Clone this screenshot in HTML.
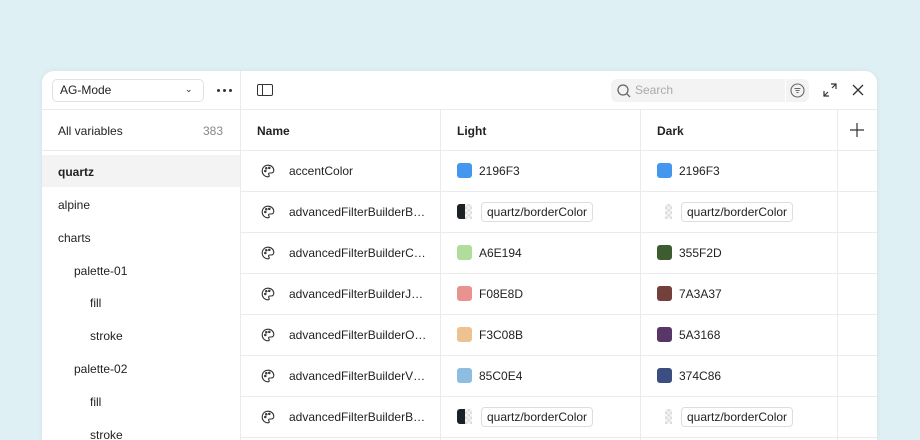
<!DOCTYPE html><html><head><style>
*{margin:0;padding:0;box-sizing:border-box}
html,body{width:920px;height:440px;overflow:hidden}
body{background:#dff0f4;font-family:"Liberation Sans",sans-serif;font-size:12px;color:#222;position:relative}
.p{position:absolute;left:42px;top:71px;width:835px;height:369px;background:#fff;border-radius:12px 12px 0 0;box-shadow:0 0 6px rgba(0,0,0,.06);overflow:hidden}
.a{position:absolute}
.t{position:absolute;line-height:14px;white-space:nowrap}
.hl{position:absolute;height:1px;background:#ebebeb}
.vl{position:absolute;width:1px;background:#ebebeb}
.sw{position:absolute;width:15px;height:15px;border-radius:3px}
.tag{position:absolute;height:20px;border:1px solid #ddd;border-radius:4px;padding:2px 5px;line-height:14px;font-size:12px}
.chk{position:absolute;width:7px;height:15px;background:repeating-conic-gradient(#ddd 0 25%,#f6f6f6 0 50%) 0 0/5px 5px}
</style></head><body>
<div class="p">
<div class="a" style="left:10px;top:8px;width:152px;height:23px;border:1px solid #e2e2e2;border-radius:5px"></div>
<div class="t" style="left:18px;top:12px">AG-Mode</div>
<div class="t" style="left:143px;top:11px;font-size:9px">&#8964;</div>
<div class="a" style="left:175px;top:18px;width:3px;height:3px;border-radius:2px;background:#333;box-shadow:6px 0 #333,12px 0 #333"></div>
<div class="vl" style="left:198px;top:0;height:400px"></div>
<div class="hl" style="left:0;top:38px;width:835px"></div>
<div class="a" style="left:215px;top:13px;width:16px;height:12px;border:1.3px solid #333;border-radius:2px"></div>
<div class="a" style="left:220px;top:13px;width:1.3px;height:12px;background:#333"></div>
<div class="a" style="left:569px;top:8px;width:198px;height:23px;background:#f3f3f3;border-radius:6px"></div>
<div class="a" style="left:743px;top:8px;width:1px;height:23px;background:#fff"></div>
<svg class="a" style="left:574px;top:12px" width="16" height="16" viewBox="0 0 16 16" fill="none" stroke="#666" stroke-width="1.3"><circle cx="7" cy="7" r="5"/><path d="M10.6 10.6L14 14"/></svg>
<div class="t" style="left:593px;top:12px;color:#aaa">Search</div>
<svg class="a" style="left:748px;top:12px" width="15" height="15" viewBox="0 0 15 15" fill="none" stroke="#666" stroke-width="1.1"><circle cx="7.5" cy="7.5" r="6.5"/><path d="M4.5 5.5h6M5.5 7.5h4M6.5 9.5h2"/></svg>
<svg class="a" style="left:781px;top:12px" width="14" height="14" viewBox="0 0 14 14" fill="none" stroke="#333" stroke-width="1.2"><path d="M8 1h5v5M13 1L9 5M6 13H1V8M1 13l4-4"/></svg>
<svg class="a" style="left:810px;top:13px" width="12" height="12" viewBox="0 0 12 12" stroke="#333" stroke-width="1.3"><path d="M1 1l10 10M11 1L1 11"/></svg>
<div class="t" style="left:16px;top:53px">All variables</div>
<div class="t" style="left:161px;top:53px;color:#888">383</div>
<div class="hl" style="left:0;top:79px;width:198px"></div>
<div class="a" style="left:0;top:84px;width:198px;height:32px;background:#f3f3f3"></div>
<div class="t" style="left:16px;top:94px;font-weight:bold">quartz</div>
<div class="t" style="left:16px;top:127px">alpine</div>
<div class="t" style="left:16px;top:160px">charts</div>
<div class="t" style="left:32px;top:193px">palette-01</div>
<div class="t" style="left:48px;top:225px">fill</div>
<div class="t" style="left:48px;top:258px">stroke</div>
<div class="t" style="left:32px;top:291px">palette-02</div>
<div class="t" style="left:48px;top:324px">fill</div>
<div class="t" style="left:48px;top:357px">stroke</div>
<div class="vl" style="left:398px;top:38px;height:400px"></div>
<div class="vl" style="left:598px;top:38px;height:400px"></div>
<div class="vl" style="left:795px;top:38px;height:400px"></div>
<div class="t" style="left:215px;top:53px;font-weight:bold">Name</div>
<div class="t" style="left:415px;top:53px;font-weight:bold">Light</div>
<div class="t" style="left:615px;top:53px;font-weight:bold">Dark</div>
<svg class="a" style="left:808px;top:52px" width="14" height="14" stroke="#333" stroke-width="1.2"><path d="M7 0v14M0 7h14"/></svg>
<div class="hl" style="left:198px;top:79px;width:637px"></div>
<div class="hl" style="left:198px;top:120px;width:637px"></div>
<div class="hl" style="left:198px;top:161px;width:637px"></div>
<div class="hl" style="left:198px;top:202px;width:637px"></div>
<div class="hl" style="left:198px;top:243px;width:637px"></div>
<div class="hl" style="left:198px;top:284px;width:637px"></div>
<div class="hl" style="left:198px;top:325px;width:637px"></div>
<div class="hl" style="left:198px;top:366px;width:637px"></div>
<div id="rows"></div>
</div>
<script>
var R=[["accentColor","#4496ee","2196F3","#4496ee","2196F3"],["advancedFilterBuilderB…",0],["advancedFilterBuilderC…","#b0dd9c","A6E194","#3d5c31","355F2D"],["advancedFilterBuilderJ…","#ea9290","F08E8D","#74403b","7A3A37"],["advancedFilterBuilderO…","#edc290","F3C08B","#583667","5A3168"],["advancedFilterBuilderV…","#8dbde0","85C0E4","#3c4d82","374C86"],["advancedFilterBuilderB…",0]];
var h="";
R.forEach(function(r,i){var y=79+i*41,c=y+21;
h+='<svg class="a" style="left:219px;top:'+(c-7)+'px" width="14" height="14" viewBox="0 0 14 14" fill="none" stroke="#333" stroke-width="1.1"><path d="M7 1.2C3.7 1.2 1.2 3.7 1.2 7S3.7 12.8 7 12.8c.8 0 1.2-.5 1.2-1.1 0-.7-.6-1-.6-1.6 0-.7.5-1.1 1.2-1.1h1.4c1.7 0 2.6-1.2 2.6-2.6C12.8 3.4 10.2 1.2 7 1.2z"/><circle cx="4.3" cy="7" r=".7"/><circle cx="5.3" cy="4.3" r=".7"/><circle cx="8.3" cy="3.9" r=".7"/></svg>';
h+='<div class="t" style="left:247px;top:'+(c-7)+'px">'+r[0]+'</div>';
if(r[1]){h+='<div class="sw" style="left:415px;top:'+(c-8)+'px;background:'+r[1]+'"></div><div class="t" style="left:437px;top:'+(c-7)+'px">'+r[2]+'</div>';
h+='<div class="sw" style="left:615px;top:'+(c-8)+'px;background:'+r[3]+'"></div><div class="t" style="left:637px;top:'+(c-7)+'px">'+r[4]+'</div>';}
else{h+='<div class="sw" style="left:415px;top:'+(c-8)+'px;width:8px;background:#1b2124;border-radius:3px 0 0 3px"></div><div class="chk" style="left:423px;top:'+(c-8)+'px"></div><div class="tag" style="left:439px;top:'+(c-10)+'px">quartz/borderColor</div>';
h+='<div class="chk" style="left:623px;top:'+(c-8)+'px"></div><div class="tag" style="left:639px;top:'+(c-10)+'px">quartz/borderColor</div>';}
});
document.getElementById("rows").innerHTML=h;
</script>
</body></html>
